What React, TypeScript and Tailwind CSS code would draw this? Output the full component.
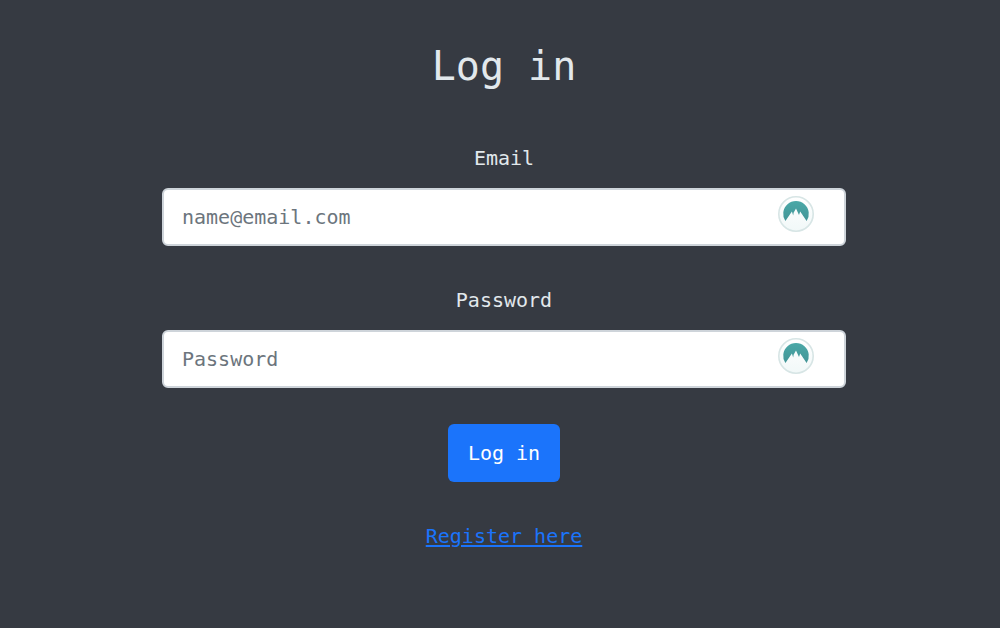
import { useId } from "react";

function MountainBadge() {
  const id = useId();
  return (
    <svg viewBox="0 0 36 36" className="size-9" aria-hidden="true">
      <defs>
        <linearGradient id={`${id}-disc`} x1="0" y1="0" x2="0" y2="1">
          <stop offset="0" stopColor="#ffffff" />
          <stop offset="1" stopColor="#f1f8f8" />
        </linearGradient>
        <linearGradient id={`${id}-sky`} x1="0" y1="0" x2="0" y2="1">
          <stop offset="0" stopColor="#4aa8a7" />
          <stop offset="1" stopColor="#439597" />
        </linearGradient>
      </defs>
      <circle cx="18" cy="18" r="17.2" fill={`url(#${id}-disc)`} stroke="#d7e5e5" strokeWidth="1.6" />
      <path
        fill={`url(#${id}-sky)`}
        d="M7.4 25A12.8 12.8 0 1 1 28.6 25L22.2 15.4L21 19L18 12.4L15.6 16.8L15.2 19.4L13.9 15.4Z"
      />
    </svg>
  );
}

type FieldProps = {
  label: string;
  type: string;
  name: string;
  placeholder: string;
};

function Field({ label, type, name, placeholder }: FieldProps) {
  const id = useId();
  return (
    <div className="flex flex-col items-center gap-3">
      <label htmlFor={id} className="text-xl leading-9">
        {label}
      </label>
      <div className="relative w-full">
        <input
          id={id}
          type={type}
          name={name}
          placeholder={placeholder}
          className="block h-[58px] w-full rounded-md border-2 border-[#ced4da] bg-white pr-20 pl-[18px] text-xl text-[#495057] placeholder:text-[#6c757d]"
        />
        <span className="pointer-events-none absolute top-2 right-8">
          <MountainBadge />
        </span>
      </div>
    </div>
  );
}

export default function App() {
  return (
    <main className="flex min-h-screen justify-center bg-[#363a42] pt-9 pr-4 pb-16 pl-6 font-['DejaVu_Sans_Mono','Liberation_Mono',monospace] text-[#e2e8ec]">
      <form className="flex w-full max-w-[684px] flex-col items-center">
        <h1 className="text-[40px] leading-[60px]">Log in</h1>
        <div className="mt-11 flex w-full flex-col gap-9">
          <Field label="Email" type="email" name="email" placeholder="name@email.com" />
          <Field label="Password" type="password" name="password" placeholder="Password" />
        </div>
        <button type="button" className="mt-9 h-[58px] rounded-md bg-[#1b74fb] px-5 text-xl text-white">
          Log in
        </button>
        <a href="#register" className="mt-9 text-xl leading-9 text-[#1b74fb] underline decoration-2 underline-offset-2">
          Register here
        </a>
      </form>
    </main>
  );
}
